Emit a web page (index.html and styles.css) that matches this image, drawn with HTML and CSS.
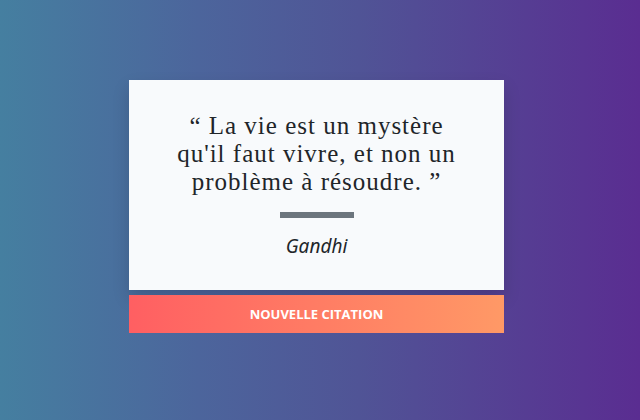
FILE: index.html
```html
<!DOCTYPE html>
<html lang="fr">
<head>
<meta charset="utf-8">
<meta name="viewport" content="width=device-width, initial-scale=1">
<title>Citations</title>
<link rel="stylesheet" href="styles.css">
</head>
<body>
<main class="quote">
  <figure class="card">
    <blockquote class="text">“ La vie est un mystère qu'il faut vivre, et non un problème à résoudre. ”</blockquote>
    <hr class="rule">
    <figcaption class="author">Gandhi</figcaption>
  </figure>
  <button class="next" type="button">NOUVELLE CITATION</button>
</main>
</body>
</html>
```
FILE: styles.css
```css
* {
  box-sizing: border-box;
}

body {
  margin: 0;
  min-height: 100vh;
  padding: 80px 136px 80px 129px;
  background: linear-gradient(to right, #457fa0, #4c659c 31%, #505496 56%, #5a2d91);
  font-family: "Noto Sans", sans-serif;
  color: #212529;
}

.quote {
  display: flex;
  flex-direction: column;
  gap: 5px;
}

.card {
  margin: 0;
  padding: 32px;
  background: #f8fafc;
  box-shadow: 0 8px 16px rgba(0, 0, 0, 0.15);
  text-align: center;
}

.text {
  margin: 0;
  font-family: "Liberation Serif", serif;
  font-size: 25px;
  line-height: 28px;
  letter-spacing: 1px;
  text-wrap: balance;
}

.rule {
  width: 74px;
  height: 6px;
  margin: 16px auto;
  border: 0;
  background: #6c757d;
}

.author {
  font-size: 19px;
  line-height: 24px;
  font-style: italic;
}

.next {
  height: 38px;
  padding: 0;
  border: 0;
  background: linear-gradient(to right, #ff5f62, #ff9966);
  color: #fff;
  font: bold 13px/18px "Open Sans", sans-serif;
  cursor: pointer;
}
```
